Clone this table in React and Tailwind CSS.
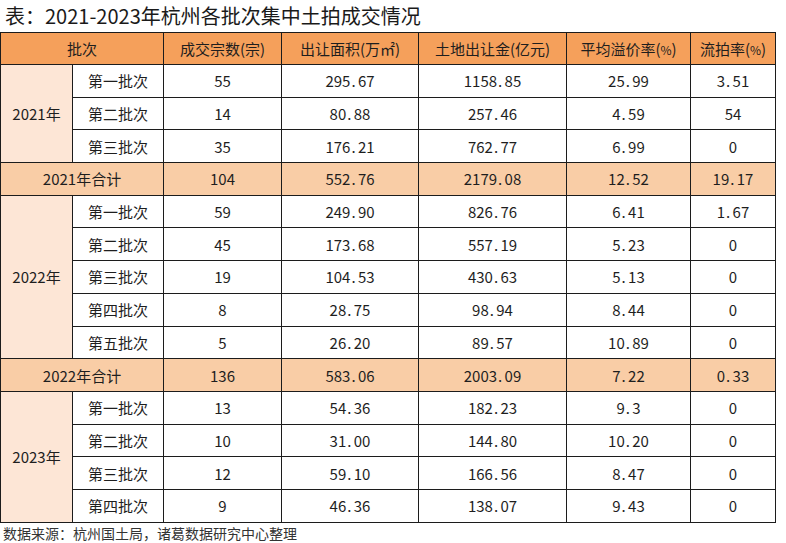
import React from "react";

const font = { fontFamily: '"Noto Sans CJK SC", "Liberation Sans", sans-serif' };

const groups = [
  {
    year: "2021年",
    rows: [
      ["第一批次", "55", "295.67", "1158.85", "25.99", "3.51"],
      ["第二批次", "14", "80.88", "257.46", "4.59", "54"],
      ["第三批次", "35", "176.21", "762.77", "6.99", "0"],
    ],
    total: ["2021年合计", "104", "552.76", "2179.08", "12.52", "19.17"],
  },
  {
    year: "2022年",
    rows: [
      ["第一批次", "59", "249.90", "826.76", "6.41", "1.67"],
      ["第二批次", "45", "173.68", "557.19", "5.23", "0"],
      ["第三批次", "19", "104.53", "430.63", "5.13", "0"],
      ["第四批次", "8", "28.75", "98.94", "8.44", "0"],
      ["第五批次", "5", "26.20", "89.57", "10.89", "0"],
    ],
    total: ["2022年合计", "136", "583.06", "2003.09", "7.22", "0.33"],
  },
  {
    year: "2023年",
    rows: [
      ["第一批次", "13", "54.36", "182.23", "9.3", "0"],
      ["第二批次", "10", "31.00", "144.80", "10.20", "0"],
      ["第三批次", "12", "59.10", "166.56", "8.47", "0"],
      ["第四批次", "9", "46.36", "138.07", "9.43", "0"],
    ],
  },
];

const td = "border border-[#1c1c1c] text-center align-middle p-0";

function Num({ v }) {
  if (!v.includes(".")) return <span>{v}</span>;
  const [a, b] = v.split(".");
  return (
    <span>
      {a}
      <span className="inline-block w-[7.5px] pl-[1px] text-left">.</span>
      {b}
    </span>
  );
}

export default function App() {
  return (
    <div className="w-[786px] h-[543px] bg-white text-[#1e1e1e] overflow-hidden" style={font}>
      <div className="h-8 flex items-center pl-[5px] text-[20px] leading-none text-[#1a1a1a]">
        表：2021-2023年杭州各批次集中土拍成交情况
      </div>
      <table className="w-[775px] table-fixed border-collapse text-[15px] leading-none">
        <colgroup>
          <col className="w-[72px]" />
          <col className="w-[91px]" />
          <col className="w-[118px]" />
          <col className="w-[137px]" />
          <col className="w-[148px]" />
          <col className="w-[124px]" />
          <col className="w-[85px]" />
        </colgroup>
        <thead>
          <tr className="h-8 bg-[#f5a05b]">
            <th className={`${td} font-normal`} colSpan={2}>批次</th>
            <th className={`${td} font-normal`}>成交宗数(宗)</th>
            <th className={`${td} font-normal`}>出让面积(万㎡)</th>
            <th className={`${td} font-normal`}>土地出让金(亿元)</th>
            <th className={`${td} font-normal`}>平均溢价率(<span className="text-[12px]">%</span>)</th>
            <th className={`${td} font-normal`}>流拍率(<span className="text-[12px]">%</span>)</th>
          </tr>
        </thead>
        <tbody>
          {groups.map((g) => (
            <React.Fragment key={g.year}>
              {g.rows.map((r, i) => (
                <tr key={i} className="h-[32.7px]">
                  {i === 0 && (
                    <td className={`${td} bg-[#fde6d6]`} rowSpan={g.rows.length}>
                      {g.year}
                    </td>
                  )}
                  <td className={td}>{r[0]}</td>
                  {r.slice(1).map((c, j) => (
                    <td key={j} className={td}><Num v={c} /></td>
                  ))}
                </tr>
              ))}
              {g.total && (
                <tr className="h-[32.7px] bg-[#f9cda6]">
                  <td className={td} colSpan={2}>{g.total[0]}</td>
                  {g.total.slice(1).map((c, j) => (
                    <td key={j} className={td}><Num v={c} /></td>
                  ))}
                </tr>
              )}
            </React.Fragment>
          ))}
        </tbody>
      </table>
      <div className="pl-[3px] pt-[3px] text-[14px] leading-none text-[#333]">
        数据来源：杭州国土局，诸葛数据研究中心整理
      </div>
    </div>
  );
}
